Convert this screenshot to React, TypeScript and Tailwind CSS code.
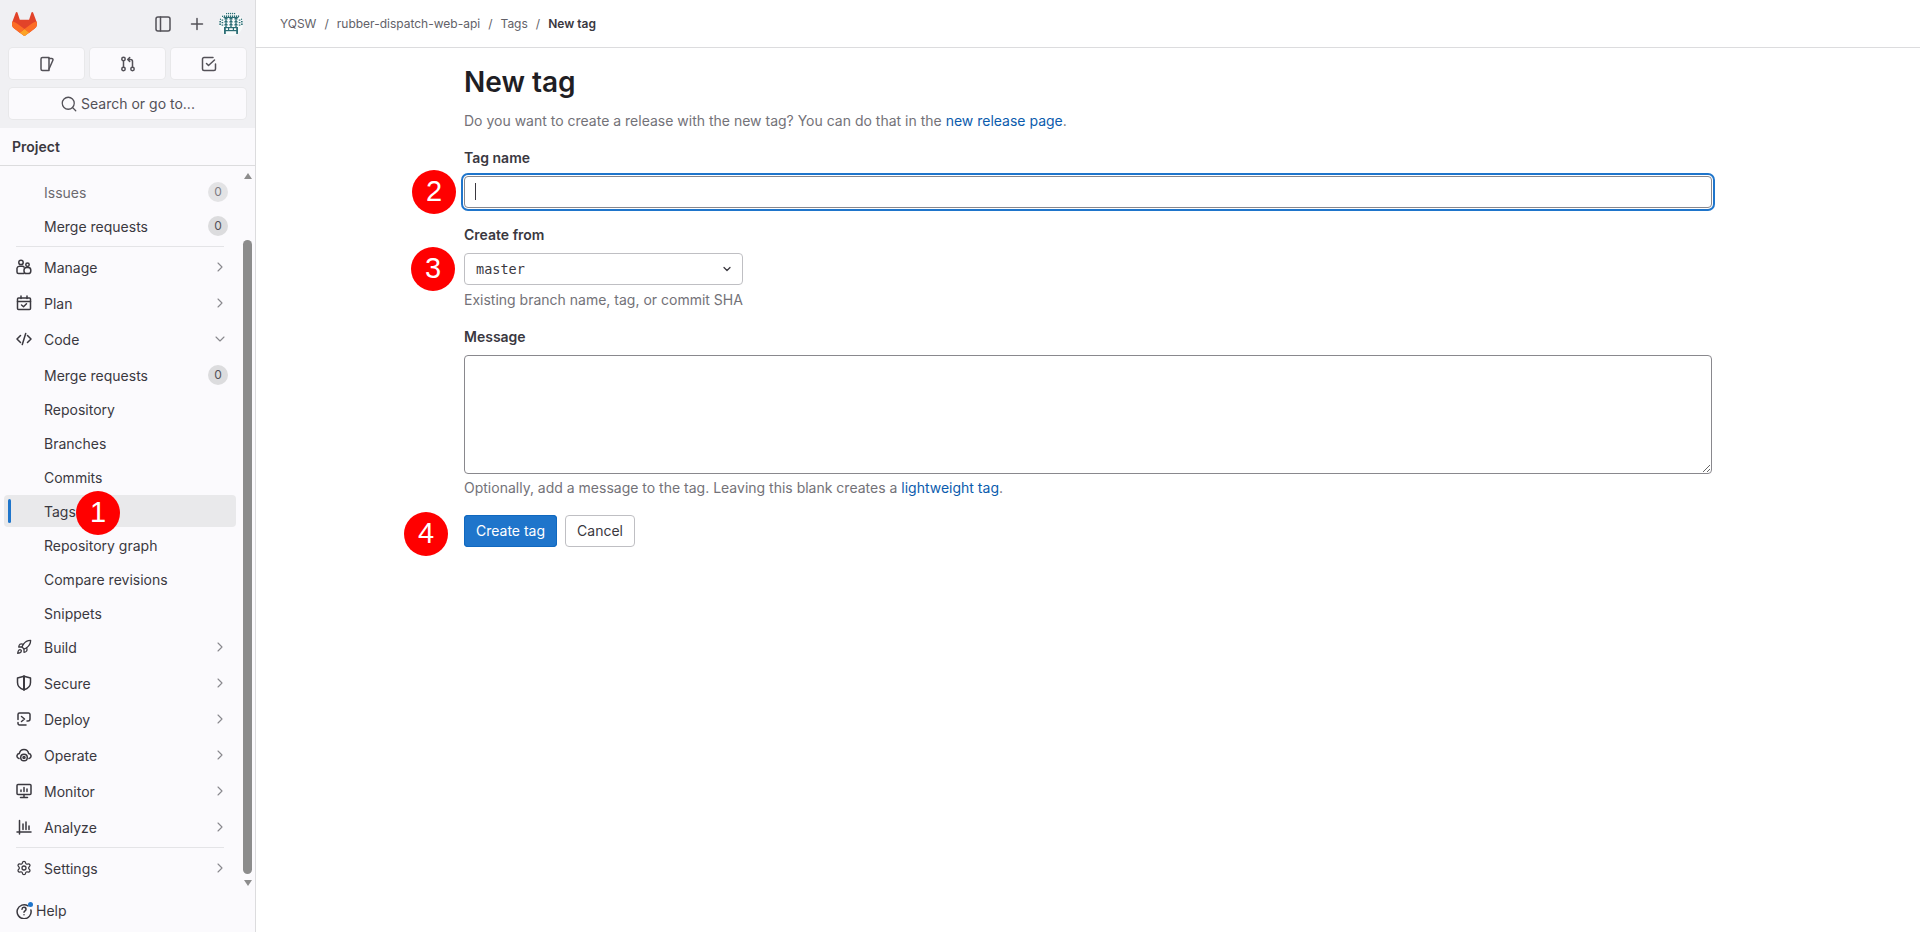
import React from "react";
import { ChevronRight, ChevronDown, Rocket, Settings, Search } from "lucide-react";

const S = ({ children, className = "w-4 h-4" }: { children: React.ReactNode; className?: string }) => (
  <svg viewBox="0 0 16 16" fill="none" stroke="currentColor" strokeWidth={1.5} strokeLinecap="round" strokeLinejoin="round" className={className}>
    {children}
  </svg>
);

const Manage = () => (
  <S>
    <circle cx="5" cy="3.4" r="2.2" />
    <path d="M1 13V9.2A2.6 2.6 0 0 1 3.6 7.2H6.5A2 2 0 0 1 8 8M1 13a1.5 1.5 0 0 0 1.5 1.5H8" />
    <circle cx="11.5" cy="5.8" r="1.7" />
    <rect x="8" y="8.6" width="6.8" height="5.9" rx="2.6" />
  </S>
);
const Plan = () => (
  <S>
    <rect x="1.5" y="3" width="13" height="11.5" rx="1" />
    <path d="M1.5 6.5h13M5 1v2.5M11 1v2.5M5.5 10l2 1.7 3-3" />
  </S>
);
const CodeI = () => (
  <S>
    <path d="M4.5 4.5 1 8l3.5 3.5M11.5 4.5 15 8l-3.5 3.5M9.7 2.5 6.3 13.5" />
  </S>
);
const Secure = () => (
  <S>
    <path d="M8 1.2 14.5 3v4.5c0 3.7-2.7 6.2-6.5 7.3-3.8-1.1-6.5-3.6-6.5-7.3V3z" />
    <path d="M8 1.2v13.6" strokeWidth={2} />
  </S>
);
const Deploy = () => (
  <S>
    <path d="M2 8.5V3.5A1.5 1.5 0 0 1 3.5 2h9A1.5 1.5 0 0 1 14 3.5V8a2 2 0 0 1-2 2h-1M2 11.5v1A1.5 1.5 0 0 0 3.5 14H10" />
    <path d="m5.5 5.5 3 2.5-3 2.5" />
  </S>
);
const Operate = () => (
  <S>
    <path d="M3 11.5C1.5 11 .8 9.8 1 8.7 1.2 7.5 2.2 6.7 3.3 6.6 3.8 4 5.8 2.5 8 2.5s4.2 1.5 4.7 4.1c1.1.1 2.1.9 2.3 2.1.2 1.1-.5 2.3-2 2.8" />
    <circle cx="8" cy="10.5" r="3.3" />
    <circle cx="8" cy="10.5" r="1" />
  </S>
);
const Monitor = () => (
  <S>
    <rect x="1" y="1.5" width="14" height="10" rx="1" />
    <path d="M8 11.5V14.5M4.5 14.5h7M5 8.5V7M8 8.5V4.5M11 8.5V6" />
  </S>
);
const Analyze = () => (
  <S>
    <path d="M1 13h14M3.5 15V1.5M7 10.5V5M10 10.5V3M13 10.5V7" />
  </S>
);
const HelpI = () => (
  <S>
    <path d="M12 2.9A7 7 0 1 0 14.9 7" />
    <path d="M6 6.2A2 2 0 0 1 10 6.5c0 1.2-2 1.5-2 2.8M8 11.7v.1" />
  </S>
);

const Item = ({ label, icon, chev, count, active, faded, down }: { label: string; icon?: React.ReactNode; chev?: boolean; down?: boolean; count?: number; active?: boolean; faded?: boolean }) => (
  <div className={`relative flex items-center h-8 mx-1 rounded-[4px] ${active ? "bg-[#e9e9eb]" : ""} ${faded ? "opacity-75" : ""}`}>
    {active && <span className="absolute left-1 top-1 h-6 w-[3px] rounded-sm bg-[#1f75cb]" />}
    <span className="w-10 pl-3 shrink-0 flex items-center text-[#3a383f]">{icon}</span>
    <span className="flex-1 text-sm leading-5 pt-[2px] text-[#3a383f]">{label}</span>
    {count !== undefined && (
      <span className="mr-2 w-5 h-5 rounded-full bg-[#dcdcde] text-[#535158] text-xs flex items-center justify-center">{count}</span>
    )}
    {chev && <ChevronRight className="w-4 h-4 mr-2 text-[#89888d]" strokeWidth={1.6} />}
    {down && <ChevronDown className="w-4 h-4 mr-2 text-[#89888d]" strokeWidth={1.6} />}
  </div>
);

const Divider = () => <div className="h-px mx-4 my-1 bg-[#e4e4e7]" />;

const Avatar = () => {
  const cells: [number, number, number, number][] = [];
  for (let x = 7; x < 17; x += 2) cells.push([x, 0.8, 1.2, 1.4]);
  for (let x = 3; x < 21; x += 2) cells.push([x, 3.4, 1.2, 1.6]);
  cells.push([4.5, 5, 15, 1]);
  for (const y of [6, 9, 12]) for (const x of [5.5, 10.5, 15.5]) cells.push([x, y, 3, 1.6], [x + 0.8, y + 1.6, 1.4, 1.4]);
  for (const y of [6.5, 9, 11.5]) cells.push([0.2, y, 1.8, 1.4], [22, y, 1.8, 1.4], [2.6, y + 1, 1.6, 1.2], [19.8, y + 1, 1.6, 1.2]);
  cells.push([5, 15, 14, 1.2], [5, 16, 1.8, 6], [17.2, 16, 1.8, 6], [6, 18, 12, 1.2], [9, 16, 1.2, 2], [13.8, 16, 1.2, 2]);
  return (
    <svg viewBox="0 0 24 24" className="w-6 h-6 rounded-full bg-[#f7fafa]">
      {cells.map((c, i) => (
        <rect key={i} x={c[0]} y={c[1]} width={c[2]} height={c[3]} fill="#2c6e75" />
      ))}
    </svg>
  );
};

const Badge = ({ n, className }: { n: number; className: string }) => (
  <div className={`absolute w-11 h-11 rounded-full bg-[#ff0000] text-white text-[29px] flex items-center justify-center font-['Liberation_Sans',sans-serif] ${className}`}>{n}</div>
);

export default function App() {
  return (
    <div className="relative flex h-[932px] w-[1920px] overflow-hidden bg-white font-['Inter',sans-serif] text-[#3a383f]">
      <aside className="flex w-[256px] shrink-0 flex-col border-r border-[#dcdcde] bg-[#fbfafd]">
        <div className="h-32 shrink-0 bg-[#f0f0f3]">
          <div className="flex h-12 items-center pl-3 pr-3">
            <svg viewBox="0 0 25 24" className="w-[25px] h-6" fill="none">
              <path d="m24.507 9.5-.034-.09L21.082.562a.896.896 0 0 0-1.694.091l-2.29 7.01H7.825L5.535.653a.898.898 0 0 0-1.694-.09L.451 9.411.416 9.5a6.297 6.297 0 0 0 2.09 7.278l.012.01.03.022 5.16 3.867 2.56 1.935 1.554 1.176a1.051 1.051 0 0 0 1.268 0l1.555-1.176 2.56-1.935 5.197-3.89.014-.01A6.297 6.297 0 0 0 24.507 9.5Z" fill="#E24329" />
              <path d="m24.507 9.5-.034-.09a11.44 11.44 0 0 0-4.56 2.051l-7.447 5.632 4.742 3.584 5.197-3.89.014-.01A6.297 6.297 0 0 0 24.507 9.5Z" fill="#FC6D26" />
              <path d="m7.707 20.677 2.56 1.935 1.555 1.176a1.051 1.051 0 0 0 1.268 0l1.555-1.176 2.56-1.935-4.743-3.584-4.755 3.584Z" fill="#FCA326" />
              <path d="M5.01 11.461a11.43 11.43 0 0 0-4.56-2.05L.416 9.5a6.297 6.297 0 0 0 2.09 7.278l.012.01.03.022 5.16 3.867 4.745-3.584-7.444-5.632Z" fill="#FC6D26" />
            </svg>
            <div className="ml-auto flex items-center">
              <S className="w-4 h-4 text-[#535158]">
                <rect x="1" y="1" width="14" height="14" rx="2" />
                <path d="M5.5 1v14" />
              </S>
              <S className="w-4 h-4 ml-[18px] text-[#535158]">
                <path d="M8 2.5v11M2.5 8h11" />
              </S>
              <div className="ml-[14px]"><Avatar /></div>
            </div>
          </div>
          <div className="flex gap-[6px] px-[9px] h-[31px]">
            {[
              <S key="a"><path d="M2 3A1.5 1.5 0 0 1 3.5 1.5H10v13H3.5A1.5 1.5 0 0 1 2 13z" /><path d="M10 2.5h2.7c.9 0 1.6.8 1.2 1.7L10 13" /></S>,
              <S key="b"><circle cx="3.5" cy="3" r="1.7" /><circle cx="3.5" cy="13" r="1.7" /><circle cx="12.5" cy="13" r="1.7" /><path d="M3.5 4.7v6.6M12.5 11.3V5.5a2 2 0 0 0-2-2H8M9.7 1.5l-2 2 2 2" /></S>,
              <S key="c"><path d="M14.5 8v5A1.5 1.5 0 0 1 13 14.5H3A1.5 1.5 0 0 1 1.5 13V3A1.5 1.5 0 0 1 3 1.5H12" /><path d="m5.5 7.5 2 2 6-5.5" /></S>,
            ].map((ic, i) => (
              <div key={i} className="flex flex-1 items-center justify-center rounded-[4px] bg-[#fbfafd] shadow-[0_0_0_1px_#e8e8ea] text-[#535158]">{ic}</div>
            ))}
          </div>
          <div className="mx-[9px] mt-[9px] flex h-[31px] items-center justify-center rounded-[4px] bg-[#fbfafd] shadow-[0_0_0_1px_#e8e8ea] text-sm text-[#535158]">
            <Search className="mr-[3px] h-[18px] w-[18px]" strokeWidth={1.7} />
            Search or go to...
          </div>
        </div>
        <div className="flex h-[38px] shrink-0 items-center border-b border-[#dcdcde] px-3 pt-[1px] text-sm font-semibold">Project</div>

        <div className="relative flex-1 overflow-hidden pt-[10px] pr-[15px]">
          <div className="flex flex-col gap-[2px]">
            <Item label="Issues" count={0} faded />
            <Item label="Merge requests" count={0} />
          </div>
          <Divider />
          <div className="flex flex-col gap-1">
            <Item label="Manage" icon={<Manage />} chev />
            <Item label="Plan" icon={<Plan />} chev />
            <Item label="Code" icon={<CodeI />} down />
          </div>
          <div className="mt-1 flex flex-col gap-[2px]">
            {["Merge requests", "Repository", "Branches", "Commits", "Tags", "Repository graph", "Compare revisions", "Snippets"].map((l, i) => (
              <Item key={l} label={l} count={i === 0 ? 0 : undefined} active={l === "Tags"} />
            ))}
          </div>
          <div className="mt-[2px] flex flex-col gap-1">
            <Item label="Build" icon={<Rocket className="h-4 w-4" strokeWidth={1.9} />} chev />
            <Item label="Secure" icon={<Secure />} chev />
            <Item label="Deploy" icon={<Deploy />} chev />
            <Item label="Operate" icon={<Operate />} chev />
            <Item label="Monitor" icon={<Monitor />} chev />
            <Item label="Analyze" icon={<Analyze />} chev />
          </div>
          <Divider />
          <Item label="Settings" icon={<Settings className="h-4 w-4" strokeWidth={1.9} />} chev />
          {/* scrollbar overlay */}
          <div className="absolute right-[3px] top-[7px] h-0 w-0 border-x-[4.5px] border-b-[6px] border-x-transparent border-b-[#8d8d8d]" />
          <div className="absolute right-[3px] top-[74px] h-[634px] w-[9px] rounded-full bg-[#8c8c8c]" />
          <div className="absolute right-[3px] top-[714px] h-0 w-0 border-x-[4.5px] border-t-[6px] border-x-transparent border-t-[#8d8d8d]" />
        </div>

        <div className="flex h-[43px] shrink-0 items-center pl-4 text-sm">
          <span className="relative mr-1 flex h-4 w-4 items-center">
            <HelpI />
            <span className="absolute -right-[1px] -top-[1px] h-[5px] w-[5px] rounded-full bg-[#1f75cb]" />
          </span>
          Help
        </div>
      </aside>

      <main className="flex min-w-0 flex-1 flex-col">
        <nav className="flex h-12 shrink-0 items-center gap-[8px] border-b border-[#dcdcde] pl-6 text-xs text-[#626168]">
          <span>YQSW</span>
          <span>/</span>
          <span>rubber-dispatch-web-api</span>
          <span>/</span>
          <span>Tags</span>
          <span>/</span>
          <span className="font-semibold text-[#3a383f]">New tag</span>
        </nav>
        <div className="ml-[208px] w-[1248px]">
          <h1 className="mt-4 text-[28px] leading-9 font-semibold text-[#1f1e24]">New tag</h1>
          <p className="mt-[11px] text-sm leading-5 text-[#737278]">
            Do you want to create a release with the new tag? You can do that in the{" "}
            <a className="text-[#0b5cad]">new release page</a>.
          </p>
          <label className="mt-[17px] block text-sm leading-5 font-semibold">Tag name</label>
          <div className="relative mt-2">
            <input className="block h-8 w-full rounded-[4px] border border-[#89888d] bg-white px-3 text-sm outline-none shadow-[0_0_0_1px_#ffffff,0_0_0_3px_#1f75cb]" aria-label="Tag name" />
            <span className="absolute left-[11px] top-[7px] h-[17px] w-px bg-[#3a383f]" />
          </div>
          <label className="mt-[17px] block text-sm leading-5 font-semibold">Create from</label>
          <div className="mt-2 flex h-8 w-[279px] items-center rounded-[4px] border border-[#bfbfc3] bg-white pl-[11px] pr-[9px] font-['DejaVu_Sans_Mono',monospace] text-[13.5px] text-[#3a383f]">
            <span className="flex-1">master</span>
            <ChevronDown className="h-3 w-3 text-[#3a383f]" strokeWidth={2.5} />
          </div>
          <p className="mt-[5px] text-sm leading-5 text-[#737278]">Existing branch name, tag, or commit SHA</p>
          <label className="mt-[17px] block text-sm leading-5 font-semibold">Message</label>
          <textarea aria-label="Message" className="mt-2 block h-[119px] w-full rounded-[4px] border border-[#89888d] bg-white px-3 py-1 text-sm outline-none" />
          <p className="mt-1 text-sm leading-5 text-[#737278]">
            Optionally, add a message to the tag. Leaving this blank creates a <a className="text-[#0b5cad]">lightweight tag</a>.
          </p>
          <div className="mt-[17px] flex gap-2">
            <button className="h-8 rounded-[4px] bg-[#1f75cb] px-3 text-sm text-white shadow-[inset_0_0_0_1px_#1068bf]">Create tag</button>
            <button className="h-8 rounded-[4px] border border-[#bfbfc3] bg-white px-[11px] text-sm text-[#3a383f]">Cancel</button>
          </div>
        </div>
      </main>

      <Badge n={1} className="left-[76px] top-[491px]" />
      <Badge n={2} className="left-[412px] top-[170px]" />
      <Badge n={3} className="left-[411px] top-[247px]" />
      <Badge n={4} className="left-[404px] top-[512px]" />
    </div>
  );
}
